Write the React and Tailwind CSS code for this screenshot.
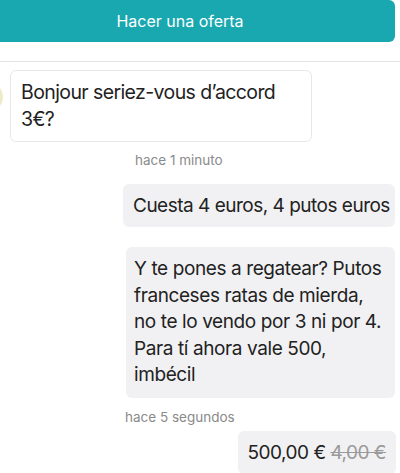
export default function App() {
  return (
    <div className="w-[400px] h-[473px] overflow-hidden bg-white font-['Inter',sans-serif] text-[#222]">
      <div className="-ml-3 flex h-[42px] w-[407px] items-center justify-center rounded-md bg-[#19a8b0] pl-3 text-[16px] text-white">
        <span className="-ml-[35px]">Hacer una oferta</span>
      </div>
      <div className="mt-[19px] h-px bg-[#e4e4e4]" />

      <div className="mt-2 flex items-start">
        <div className="-ml-[27px] mt-[12px] h-[30px] w-[30px] rounded-full bg-[#ecebc6]" />
        <div className="ml-[7px] w-[302px] whitespace-nowrap rounded-md border border-[#e8e8e8] px-[10px] py-2 text-[19.5px] leading-[27px] tracking-[-0.6px]">
          Bonjour seriez-vous d’accord
          <br />
          3€?
        </div>
      </div>
      <p className="mt-[9px] pl-[135px] text-[13.5px] leading-[18px] text-[#8a8a8a]">hace 1 minuto</p>

      <div className="mt-[15px] flex justify-end pr-[5px]">
        <div className="w-[272px] whitespace-nowrap rounded-md bg-[#f1f1f3] px-[10px] py-[8px] text-[19px] leading-[27px] tracking-[-0.5px]">
          Cuesta 4 euros, 4 putos euros
        </div>
      </div>

      <div className="mt-[20px] flex justify-end pr-[5px]">
        <div className="w-[269px] whitespace-nowrap rounded-md bg-[#f1f1f3] px-[8px] py-[9px] text-[19px] leading-[26.5px] tracking-[-0.4px]">
          Y te pones a regatear? Putos
          <br />
          franceses ratas de mierda,
          <br />
          no te lo vendo por 3 ni por 4.
          <br />
          Para tí ahora vale 500,
          <br />
          imbécil
        </div>
      </div>
      <p className="mt-[10px] pl-[125px] text-[13.5px] leading-[18px] text-[#8a8a8a]">hace 5 segundos</p>

      <div className="mt-[5px] flex justify-end pr-[4px]">
        <div className="whitespace-nowrap rounded-md bg-[#f1f1f3] px-[10px] py-[8px] text-[19px] leading-[27px] tracking-[-0.5px]">
          500,00 € <span className="text-[#9a9a9a] line-through">4,00 €</span>
        </div>
      </div>
    </div>
  );
}
